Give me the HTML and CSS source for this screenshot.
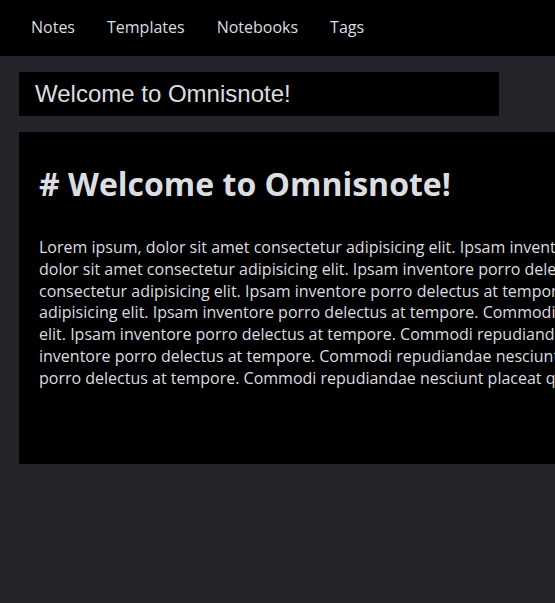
FILE: index.html
```html
<!DOCTYPE html>
<html lang="en">
<head>
<meta charset="utf-8">
<title>Omnisnote</title>
<link rel="stylesheet" href="styles.css">
</head>
<body>
<div class="app">
  <nav class="topnav">
    <a class="nav-link" href="#">Notes</a>
    <a class="nav-link" href="#">Templates</a>
    <a class="nav-link" href="#">Notebooks</a>
    <a class="nav-link" href="#">Tags</a>
  </nav>
  <main class="main">
    <input class="title-input" type="text" value="Welcome to Omnisnote!">
    <article class="note">
      <h1 class="note-heading"># Welcome to Omnisnote!</h1>
      <p class="note-body">Lorem ipsum, dolor sit amet consectetur adipisicing elit. Ipsam inventore porro delectus at tempore. Commodi repudiandae nesciunt placeat quo. Lorem ipsum, dolor sit amet consectetur adipisicing elit. Ipsam inventore porro delectus at tempore. Commodi repudiandae nesciunt placeat quo. Lorem ipsum, dolor sit amet consectetur adipisicing elit. Ipsam inventore porro delectus at tempore. Commodi repudiandae nesciunt placeat quo. Lorem ipsum, dolor sit amet consectetur adipisicing elit. Ipsam inventore porro delectus at tempore. Commodi repudiandae nesciunt placeat quo. Lorem ipsum, dolor sit amet consectetur adipisicing elit. Ipsam inventore porro delectus at tempore. Commodi repudiandae nesciunt placeat quo. Lorem ipsum, dolor sit amet consectetur adipisicing elit. Ipsam inventore porro delectus at tempore. Commodi repudiandae nesciunt placeat quo. Lorem ipsum, dolor sit amet consectetur adipisicing elit. Ipsam inventore porro delectus at tempore. Commodi repudiandae nesciunt placeat quo.</p>
    </article>
  </main>
</div>
</body>
</html>
```

FILE: styles.css
```css
html, body {
  margin: 0;
  padding: 0;
  background: #252329;
  overflow: hidden;
}

.app {
  width: 555px;
  height: 603px;
  overflow: hidden;
  font-family: "Open Sans", "Liberation Sans", sans-serif;
  color: #dbdde0;
}

.topnav {
  display: flex;
  height: 56px;
  box-sizing: border-box;
  padding: 16px 15px 0;
  background: #000;
}

.nav-link {
  padding: 0 16px;
  font-size: 16px;
  line-height: 22px;
  color: #dbdde0;
  text-decoration: none;
}

.main {
  display: flex;
  flex-direction: column;
  align-items: flex-start;
  gap: 16px;
  padding: 16px 19px;
}

.title-input {
  width: 480px;
  height: 44px;
  box-sizing: border-box;
  margin: 0;
  padding: 0 16px;
  border: none;
  outline: none;
  background: #000;
  color: #dbdde0;
  font-family: "Liberation Sans", Arial, sans-serif;
  font-size: 24px;
}

.note {
  flex: none;
  width: 1237px;
  height: 332px;
  box-sizing: border-box;
  padding: 30px 20px 20px;
  background: #000;
}

.note-heading {
  margin: 0;
  font-size: 32px;
  font-weight: 700;
  line-height: 44px;
}

.note-body {
  margin: 31px 0 0;
  font-size: 16px;
  line-height: 21.8px;
}
```
